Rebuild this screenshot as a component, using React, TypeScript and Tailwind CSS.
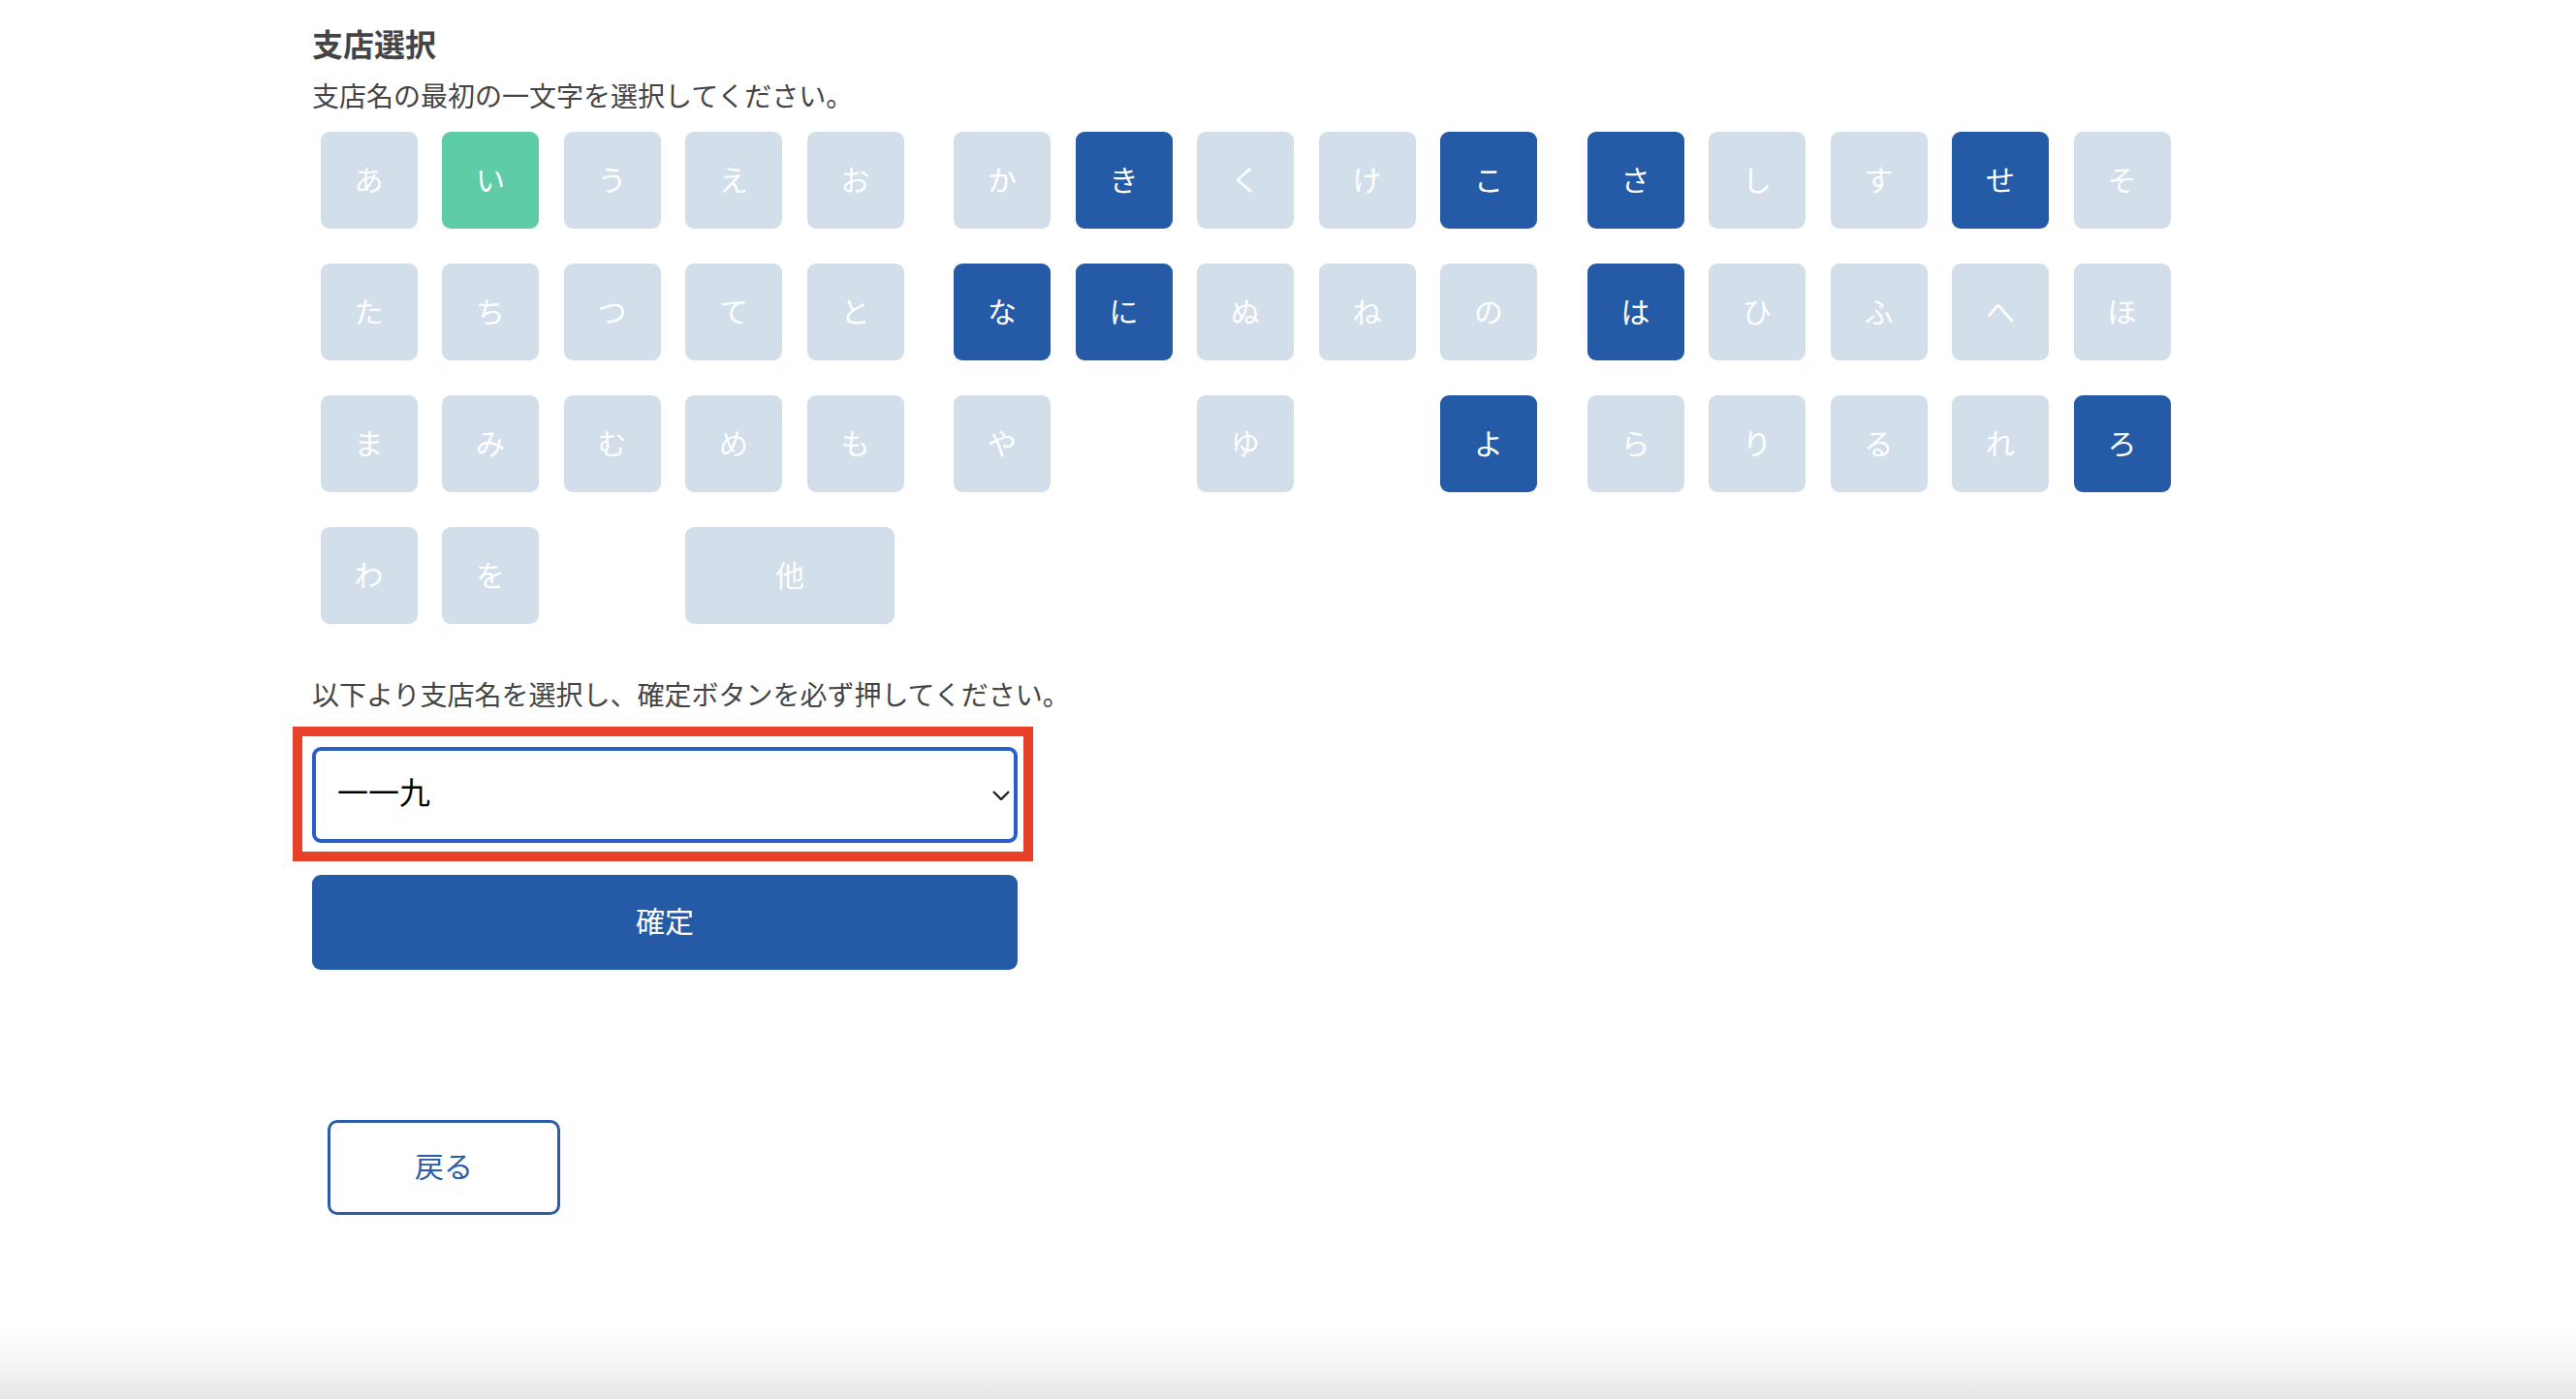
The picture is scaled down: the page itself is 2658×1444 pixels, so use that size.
type Cell = { k: string; t?: "on" | "sel"; wide?: boolean } | null;

const rows: Cell[][][] = [
  [
    [{ k: "あ" }, { k: "い", t: "sel" }, { k: "う" }, { k: "え" }, { k: "お" }],
    [{ k: "か" }, { k: "き", t: "on" }, { k: "く" }, { k: "け" }, { k: "こ", t: "on" }],
    [{ k: "さ", t: "on" }, { k: "し" }, { k: "す" }, { k: "せ", t: "on" }, { k: "そ" }],
  ],
  [
    [{ k: "た" }, { k: "ち" }, { k: "つ" }, { k: "て" }, { k: "と" }],
    [{ k: "な", t: "on" }, { k: "に", t: "on" }, { k: "ぬ" }, { k: "ね" }, { k: "の" }],
    [{ k: "は", t: "on" }, { k: "ひ" }, { k: "ふ" }, { k: "へ" }, { k: "ほ" }],
  ],
  [
    [{ k: "ま" }, { k: "み" }, { k: "む" }, { k: "め" }, { k: "も" }],
    [{ k: "や" }, null, { k: "ゆ" }, null, { k: "よ", t: "on" }],
    [{ k: "ら" }, { k: "り" }, { k: "る" }, { k: "れ" }, { k: "ろ", t: "on" }],
  ],
  [[{ k: "わ" }, { k: "を" }, null, { k: "他", wide: true }], [], []],
];

const KanaKey = ({ cell }: { cell: Cell }) => {
  if (!cell) return <div className="h-[100px] w-[100px]" />;
  const bg =
    cell.t === "sel" ? "bg-[#5ecca6]" : cell.t === "on" ? "bg-[#255ba6]" : "bg-[#d3deeb]";
  return (
    <button
      className={`flex h-[100px] items-center justify-center rounded-[9px] pb-[4px] text-[30px] text-white ${bg} ${
        cell.wide ? "w-[216px]" : "w-[100px]"
      }`}
    >
      {cell.k}
    </button>
  );
};

export default function App() {
  return (
    <div className="flex h-[1444px] flex-col bg-white font-['Noto_Sans_CJK_JP','Noto_Sans',sans-serif] text-[#444]">
      <main className="pl-[322px] pt-[20px]">
        <h2 className="text-[32px] font-bold leading-[48px]">支店選択</h2>
        <p className="mt-[9px] text-[28px] leading-[42px]">支店名の最初の一文字を選択してください。</p>

        <div className="mt-[17px] flex flex-col gap-y-[36px] pl-[8.5px]">
          {rows.map((groups, r) => (
            <div key={r} className="flex gap-x-[51.5px]">
              {groups.map((cells, g) => (
                <div key={g} className="flex w-[602px] gap-x-[25.5px]">
                  {cells.map((c, i) => (
                    <KanaKey key={i} cell={c} />
                  ))}
                </div>
              ))}
            </div>
          ))}
        </div>

        <p className="mt-[51px] text-[28px] leading-[42px]">
          以下より支店名を選択し、確定ボタンを必ず押してください。
        </p>

        <div className="relative mt-[34px] w-[728px]">
          <select
            defaultValue="119"
            className="h-[99px] w-full appearance-none rounded-[9px] border-[4px] border-[#2b5fc7] bg-white pb-[10px] pl-[22px] text-[32px] text-black outline-none"
          >
            <option value="119">一一九</option>
          </select>
          <svg
            className="pointer-events-none absolute right-[8px] top-1/2 h-[10px] w-[18px] -translate-y-1/2"
            viewBox="0 0 18 10"
            fill="none"
            stroke="#222"
            strokeWidth="2.4"
          >
            <path d="M1 1l8 8 8-8" />
          </svg>
          <div className="pointer-events-none absolute -bottom-[19px] -left-[20px] -right-[16px] -top-[21px] border-[10px] border-[#e8412a]" />
        </div>

        <button className="mt-[33px] flex h-[98px] w-[728px] items-center justify-center rounded-[9px] bg-[#255ba6] pb-[6px] text-[30px] text-white">
          確定
        </button>

        <button className="ml-[16px] mt-[155px] flex h-[98px] w-[240px] items-center justify-center rounded-[10px] border-[3px] border-[#2a5ca8] bg-white pb-[6px] text-[30px] text-[#2a5ca8]">
          戻る
        </button>
      </main>
      <div className="flex-1" />
      <div className="h-[80px] bg-linear-to-b from-white via-[#f7f7f7] to-[#e6e6e6]" />
    </div>
  );
}
